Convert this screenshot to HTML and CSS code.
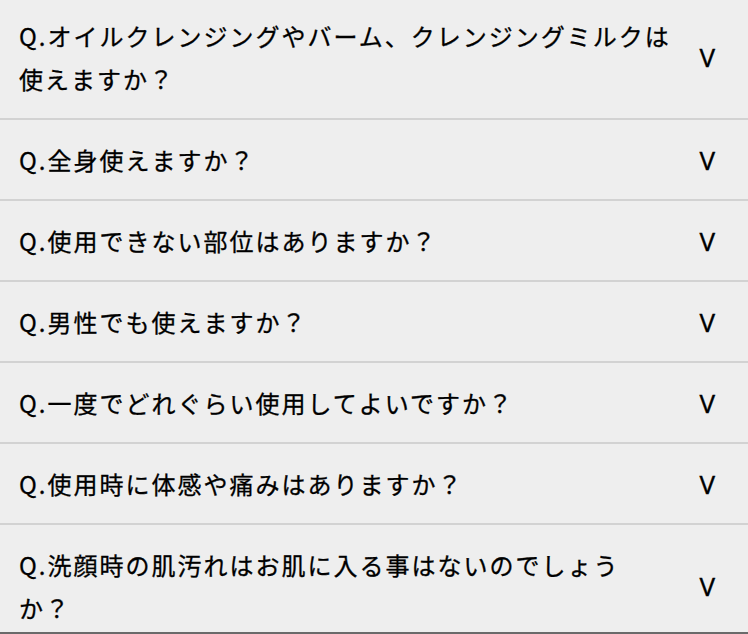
FILE: index.html
```html
<!DOCTYPE html>
<html lang="ja">
<head>
<meta charset="utf-8">
<title>FAQ</title>
<link rel="stylesheet" href="styles.css">
</head>
<body>
<div class="faq">
  <div class="item"><p class="q">Q.オイルクレンジングやバーム、クレンジングミルクは使えますか？</p><span class="v">V</span></div>
  <div class="item"><p class="q">Q.全身使えますか？</p><span class="v">V</span></div>
  <div class="item"><p class="q">Q.使用できない部位はありますか？</p><span class="v">V</span></div>
  <div class="item"><p class="q">Q.男性でも使えますか？</p><span class="v">V</span></div>
  <div class="item"><p class="q">Q.一度でどれぐらい使用してよいですか？</p><span class="v">V</span></div>
  <div class="item"><p class="q">Q.使用時に体感や痛みはありますか？</p><span class="v">V</span></div>
  <div class="item"><p class="q">Q.洗顔時の肌汚れはお肌に入る事はないのでしょう<br>か？</p><span class="v">V</span></div>
</div>
</body>
</html>
```
FILE: styles.css
```css
html, body {
  margin: 0;
  padding: 0;
  background: #eeeeee;
  overflow: hidden;
}
body {
  height: 634px;
}
.faq {
  box-sizing: border-box;
  height: 638px;
  margin-top: -4px;
  overflow: hidden;
  border-bottom: 2px solid #6a6a6a;
  font-family: "Noto Sans CJK JP", "Noto Sans", sans-serif;
  color: #000;
  -webkit-text-stroke: 0.3px #000;
}
.item {
  display: flex;
  align-items: center;
  padding: 18px 33px 18px 19px;
  border-bottom: 2px solid #d2d2d2;
}
.q {
  flex: 1;
  margin: 0;
  max-width: 660px;
  font-size: 24px;
  font-weight: 400;
  line-height: 43px;
  letter-spacing: 2px;
}
.v {
  margin-left: auto;
  font-family: "Noto Sans", sans-serif;
  font-weight: 400;
  font-size: 26px;
  line-height: 26px;
}
```
